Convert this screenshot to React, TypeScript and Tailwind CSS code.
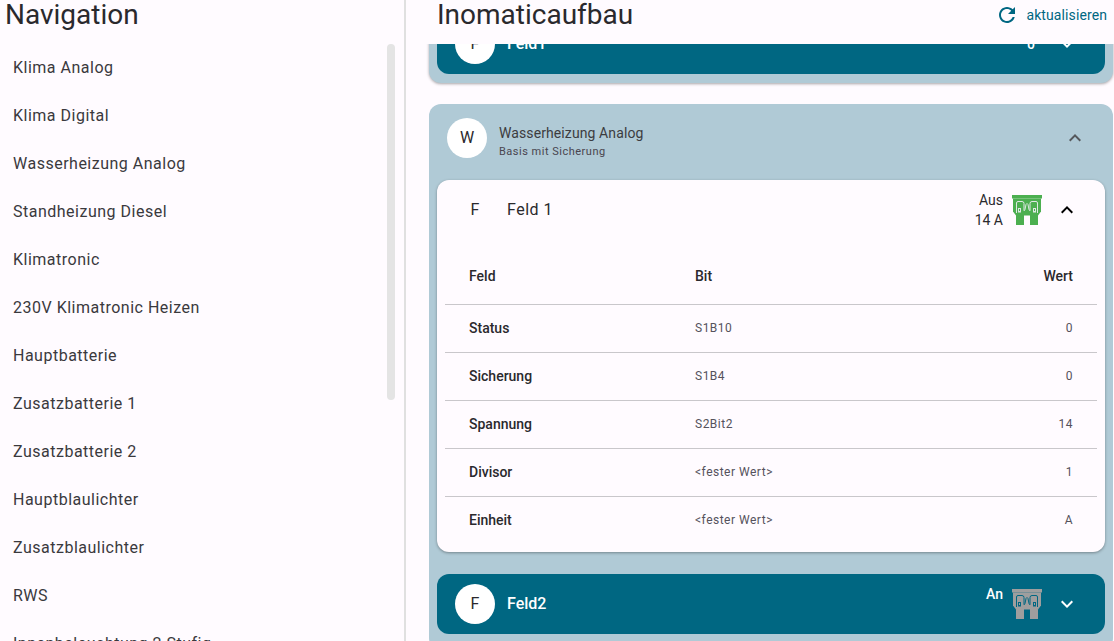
const navItems = [
  "Klima Analog",
  "Klima Digital",
  "Wasserheizung Analog",
  "Standheizung Diesel",
  "Klimatronic",
  "230V Klimatronic Heizen",
  "Hauptbatterie",
  "Zusatzbatterie 1",
  "Zusatzbatterie 2",
  "Hauptblaulichter",
  "Zusatzblaulichter",
  "RWS",
  "Innenbeleuchtung 2 Stufig",
];

const rows = [
  ["Status", "S1B10", "0"],
  ["Sicherung", "S1B4", "0"],
  ["Spannung", "S2Bit2", "14"],
  ["Divisor", "<fester Wert>", "1"],
  ["Einheit", "<fester Wert>", "A"],
];

function MatIcon({ d, className }: { d: string; className?: string }) {
  return (
    <svg width="24" height="24" viewBox="0 0 24 24" fill="currentColor" className={`shrink-0 ${className ?? ""}`}>
      <path d={d} />
    </svg>
  );
}

const expandMore = "M16.59 8.59L12 13.17 7.41 8.59 6 10l6 6 6-6z";
const expandLess = "M12 8l-6 6 1.41 1.41L12 10.83l4.59 4.58L18 14z";
const refresh =
  "M17.65 6.35C16.2 4.9 14.21 4 12 4c-4.42 0-7.99 3.58-7.99 8s3.57 8 7.99 8c3.73 0 6.84-2.55 7.73-6h-2.08c-.82 2.33-3.04 4-5.65 4-3.31 0-6-2.69-6-6s2.69-6 6-6c1.66 0 3.14.69 4.22 1.78L13 11h7V4l-2.35 2.35z";

function Fuse({ color, line }: { color: string; line: string }) {
  return (
    <svg width="32" height="32" viewBox="0 0 32 32" className="shrink-0">
      <rect x="1" y="1" width="30" height="3.500" fill={color} />
      <path d="M2 4.500h28v13l-3 4H5l-3-4z" fill={color} />
      <rect x="5" y="21" width="8" height="10" fill={color} />
      <rect x="19" y="21" width="8" height="10" fill={color} />
      <path
        d="M5.500 19V9q0-1.500 1.500-1.500h4q2 0 2 2v7q0 1 1-1l1-5q1-2 2 0l1 5q1 2 1 1v-7q0-2 2-2h4q1.500 0 1.500 1.500v10"
        fill="none"
        stroke={line}
        strokeWidth="1"
      />
      <rect x="7.500" y="14.500" width="2" height="3.500" fill="none" stroke={line} strokeWidth="1" />
      <rect x="22.500" y="14.500" width="2" height="3.500" fill="none" stroke={line} strokeWidth="1" />
    </svg>
  );
}

function Avatar({ letter, className }: { letter: string; className: string }) {
  return (
    <div className={`w-10 h-10 rounded-full flex items-center justify-center text-base text-[#2a292d] shrink-0 ${className}`}>
      {letter}
    </div>
  );
}

export default function App() {
  return (
    <div className="w-[1114px] h-[641px] overflow-hidden flex bg-[#fffbff] text-[#2a292d] font-['Roboto',sans-serif]">
      <aside className="w-[406px] h-full shrink-0 border-r-2 border-[#e0e0e0] flex flex-col">
        <h2 className="h-11 shrink-0 pl-[5px] text-[28px] leading-[30px]">Navigation</h2>
        <div className="flex-1 overflow-hidden flex">
          <ul className="flex-1 min-w-0">
            {navItems.map((item) => (
              <li key={item} className="h-12 flex items-center pl-[13px] text-base tracking-[0.5px] text-[#3a393d]">
                {item}
              </li>
            ))}
          </ul>
          <div className="w-2 h-[356px] mr-[9px] rounded bg-[#e4e4e4]" />
        </div>
      </aside>

      <main className="flex-1 min-w-0 flex flex-col">
        <header className="h-11 shrink-0 flex items-start justify-between pl-[31px] pr-[7px] relative z-10 bg-[#fffbff]">
          <h1 className="text-[28px] leading-[30px]">Inomaticaufbau</h1>
          <button className="flex items-center gap-[7px] h-[30px] text-sm tracking-[0.1px] text-[#006782]">
            <MatIcon d={refresh} />
            aktualisieren
          </button>
        </header>

        <div className="flex-1 overflow-hidden pl-[23px] pr-px">
          <section className="-mt-[38px] pt-2 px-2 pb-[9px] rounded-xl bg-[#b0cad6] shadow-[0_1px_3px_rgba(0,0,0,0.35)]">
            <div className="h-[60px] rounded-xl bg-[#006782] flex items-center pl-[18px] pr-[26px] text-white">
              <Avatar letter="F" className="bg-white" />
              <span className="ml-3 text-base font-medium">Feld1</span>
              <span className="ml-auto text-sm font-medium">0</span>
              <MatIcon d={expandMore} className="ml-5" />
            </div>
          </section>

          <section className="mt-[21px] px-2 pb-4 rounded-xl bg-[#b0cad6]">
            <div className="h-[76px] flex items-start pt-[14px] pl-[10px] pr-[18px]">
              <Avatar letter="W" className="bg-white" />
              <div className="ml-3 mt-[6px]">
                <div className="text-sm leading-[18px] tracking-[0.1px] text-[#3c3c40]">Wasserheizung Analog</div>
                <div className="mt-px text-[11px] leading-[18px] tracking-[0.5px] text-[#49454f]">Basis mit Sicherung</div>
              </div>
              <MatIcon d={expandLess} className="ml-auto mt-2 text-[#55585c]" />
            </div>

            <div className="rounded-xl bg-[#fffbff] shadow-[0_1px_3px_rgba(0,0,0,0.35)] px-2 pb-2">
              <div className="h-[60px] flex items-center pl-[10px] pr-[18px]">
                <Avatar letter="F" className="bg-[#fffbff]" />
                <span className="ml-3 text-base tracking-[0.5px]">Feld 1</span>
                <div className="ml-auto text-sm leading-5 text-right">
                  <div>Aus</div>
                  <div>14 A</div>
                </div>
                <div className="ml-2">
                  <Fuse color="#4caf50" line="#dfe8e4" />
                </div>
                <MatIcon d={expandLess} className="ml-3 text-black" />
              </div>

              <table className="w-full text-left border-collapse mt-2">
                <thead>
                  <tr className="h-14 border-b border-[#c9c7cb]">
                    <th className="pl-6 w-[250px] text-sm font-medium">Feld</th>
                    <th className="text-sm font-medium">Bit</th>
                    <th className="pr-6 text-right text-sm font-medium">Wert</th>
                  </tr>
                </thead>
                <tbody>
                  {rows.map(([name, bit, value], i) => (
                    <tr key={name} className={`h-12 ${i < rows.length - 1 ? "border-b border-[#c9c7cb]" : ""}`}>
                      <td className="pl-6 text-sm font-medium">{name}</td>
                      <td className="text-xs tracking-[0.5px] text-[#55525c]">{bit}</td>
                      <td className="pr-6 text-right text-xs tracking-[0.5px] text-[#55525c]">{value}</td>
                    </tr>
                  ))}
                </tbody>
              </table>
            </div>

            <div className="mt-[22px] h-[60px] rounded-xl bg-[#006782] flex items-center pl-[18px] pr-[26px] text-white">
              <Avatar letter="F" className="bg-white" />
              <span className="ml-3 text-base font-medium">Feld2</span>
              <span className="ml-auto -mt-5 text-sm font-medium">An</span>
              <div className="ml-2">
                <Fuse color="#9e9e9e" line="#006782" />
              </div>
              <MatIcon d={expandMore} className="ml-3" />
            </div>
          </section>
        </div>
      </main>
    </div>
  );
}
